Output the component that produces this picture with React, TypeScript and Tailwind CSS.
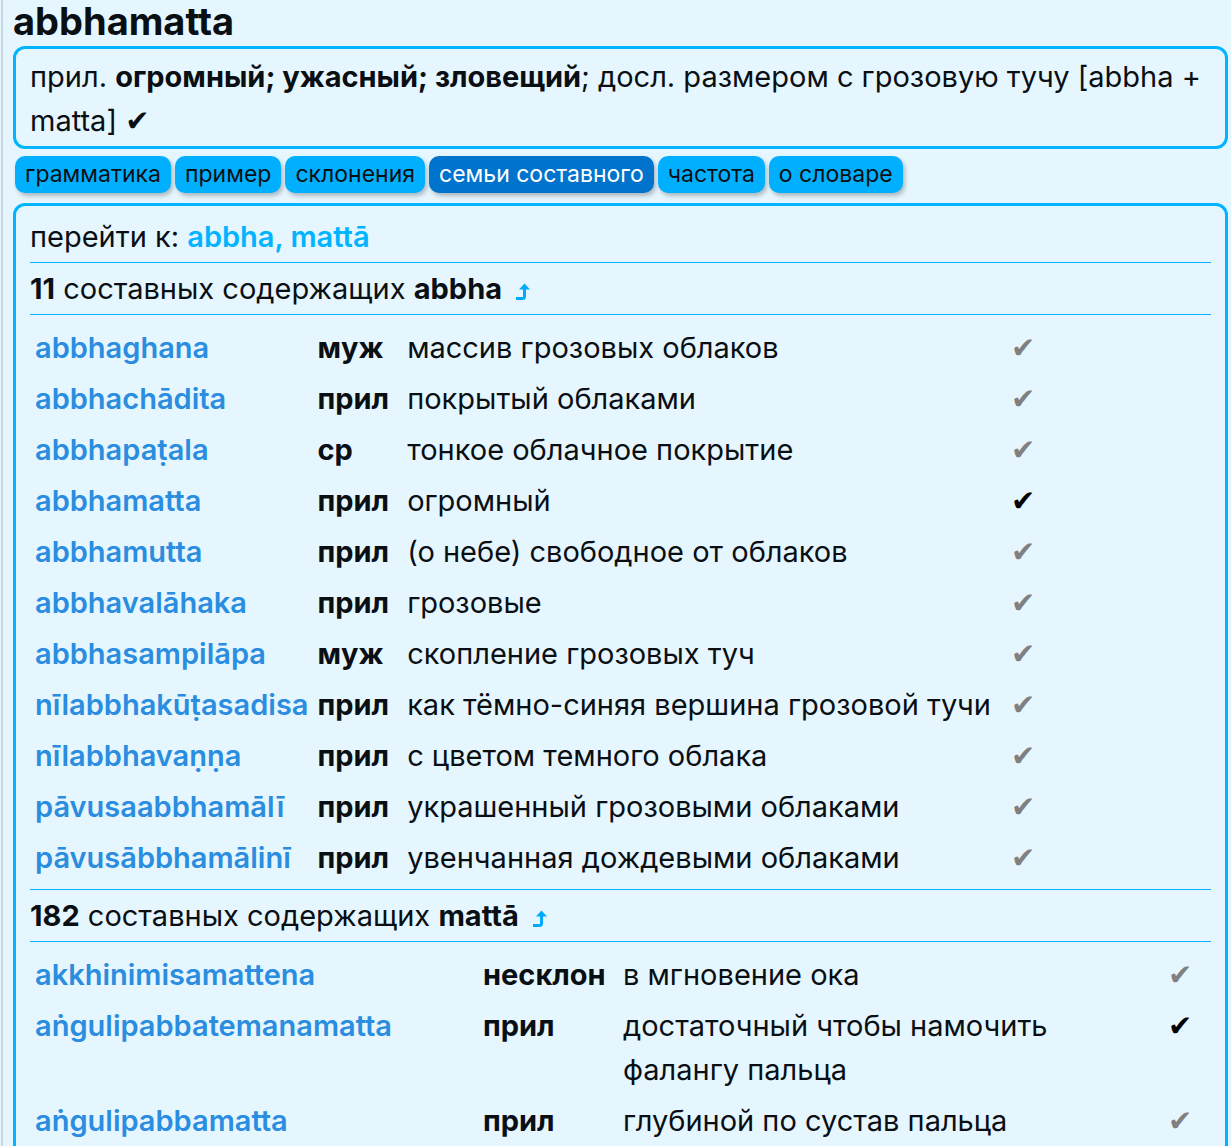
import React from "react";

const font = { fontFamily: "Inter, 'Noto Sans', sans-serif" };

type Row = { pali: string; pos: string; meaning: string; ok?: boolean };

const abbhaRows: Row[] = [
  { pali: "abbhaghana", pos: "муж", meaning: "массив грозовых облаков" },
  { pali: "abbhachādita", pos: "прил", meaning: "покрытый облаками" },
  { pali: "abbhapaṭala", pos: "ср", meaning: "тонкое облачное покрытие" },
  { pali: "abbhamatta", pos: "прил", meaning: "огромный", ok: true },
  { pali: "abbhamutta", pos: "прил", meaning: "(о небе) свободное от облаков" },
  { pali: "abbhavalāhaka", pos: "прил", meaning: "грозовые" },
  { pali: "abbhasampilāpa", pos: "муж", meaning: "скопление грозовых туч" },
  { pali: "nīlabbhakūṭasadisa", pos: "прил", meaning: "как тёмно-синяя вершина грозовой тучи" },
  { pali: "nīlabbhavaṇṇa", pos: "прил", meaning: "с цветом темного облака" },
  { pali: "pāvusaabbhamālī", pos: "прил", meaning: "украшенный грозовыми облаками" },
  { pali: "pāvusābbhamālinī", pos: "прил", meaning: "увенчанная дождевыми облаками" },
];

const mattaRows: Row[] = [
  { pali: "akkhinimisamattena", pos: "несклон", meaning: "в мгновение ока" },
  { pali: "aṅgulipabbatemanamatta", pos: "прил", meaning: "достаточный чтобы намочить фалангу пальца", ok: true },
  { pali: "aṅgulipabbamatta", pos: "прил", meaning: "глубиной по сустав пальца" },
  { pali: "aṅguliparimāṇamatta", pos: "прил", meaning: "размером с палец" },
];

const tabs = ["грамматика", "пример", "склонения", "семьи составного", "частота", "о словаре"];

function Check({ ok }: { ok?: boolean }) {
  return (
    <span
      className={ok ? "text-black" : "text-[#808080]"}
      style={{ fontFamily: "'DejaVu Sans', sans-serif" }}
    >
      ✔
    </span>
  );
}

// small "back to top" arrow next to each family header
function JumpUp() {
  return (
    <svg viewBox="0 0 16 17" className="inline-block ml-[13px] w-[16px] h-[17px] align-[-1px] text-[#00aaff]">
      <path d="M1 15.5 H7.5 Q9.5 15.5 9.5 13.5 V5" fill="none" stroke="currentColor" strokeWidth="3" />
      <path d="M4 6.5 L9.5 0.5 L15 6.5 Z" fill="currentColor" />
    </svg>
  );
}

function CompoundTable({ rows, wide }: { rows: Row[]; wide?: boolean }) {
  return (
    <table className={wide ? "w-full table-fixed" : ""}>
      {wide && (
        <colgroup>
          <col className="w-[448px]" />
          <col className="w-[140px]" />
          <col className="w-[535px]" />
          <col />
        </colgroup>
      )}
      <tbody>
        {rows.map((r) => (
          <tr key={r.pali} className="align-top">
            <td className="pl-[5px] pr-[4px] py-[3.5px] font-semibold text-[#2a8de0] whitespace-nowrap">
              {r.pali}
            </td>
            <td className="pl-[5px] pr-[13px] py-[3.5px] font-bold text-[#0a0f14] whitespace-nowrap">
              {r.pos}
            </td>
            <td className="pl-[5px] pr-[5px] py-[3.5px]">{r.meaning}</td>
            <td className="pl-[15px] pr-[5px] py-[3.5px]">
              <Check ok={r.ok} />
            </td>
          </tr>
        ))}
      </tbody>
    </table>
  );
}

export default function App() {
  return (
    <div className="min-h-screen bg-[#e6f6ff] pl-px text-[#0a0f14]" style={font}>
      <div className="min-h-screen border-l-2 border-[#c9d7e0] pl-[10px] pr-[3px] text-[29px] leading-[44px]">
        {/* Headword */}
        <h1 className="text-[38px] font-bold leading-[42px] mb-[4px]">abbhamatta</h1>

        {/* Summary */}
        <div className="rounded-xl border-[3px] border-[#00b4ff] px-[14px] pt-[6px] pb-[3px]">
          прил. <b>огромный; ужасный; зловещий</b>; досл. размером с грозовую тучу [abbha + matta]{" "}
          <span style={{ fontFamily: "'DejaVu Sans', sans-serif" }}>✔</span>
        </div>

        {/* Buttons */}
        <div className="flex gap-[4px] mt-[7px] ml-[2px]">
          {tabs.map((t) => (
            <button
              key={t}
              className={
                "h-[37px] px-[10px] rounded-[10px] text-[23px] leading-[37px] shadow-[2px_3px_4px_rgba(0,0,0,0.25)] " +
                (t === "семьи составного" ? "bg-[#0074cc] text-white" : "bg-[#00b0ff] text-[#0a0f14]")
              }
            >
              {t}
            </button>
          ))}
        </div>

        {/* Compound families */}
        <div className="mt-[10px] rounded-xl border-[3px] border-[#00b4ff] px-[14px] pb-8">
          <div className="pt-[9px] pb-[3px] border-b border-[#00b4ff]">
            перейти к: <span className="font-semibold text-[#00b4ff]">abbha, mattā</span>
          </div>

          <div className="pt-[4px] pb-[3px] border-b border-[#00b4ff]">
            <b>11</b> составных содержащих <b>abbha</b>
            <JumpUp />
          </div>
          <div className="mt-[7px] mb-[6px]">
            <CompoundTable rows={abbhaRows} />
          </div>

          <div className="pt-[4px] pb-[3px] border-y border-[#00b4ff]">
            <b>182</b> составных содержащих <b>mattā</b>
            <JumpUp />
          </div>
          <div className="mt-[7px]">
            <CompoundTable rows={mattaRows} wide />
          </div>
        </div>
      </div>
    </div>
  );
}
